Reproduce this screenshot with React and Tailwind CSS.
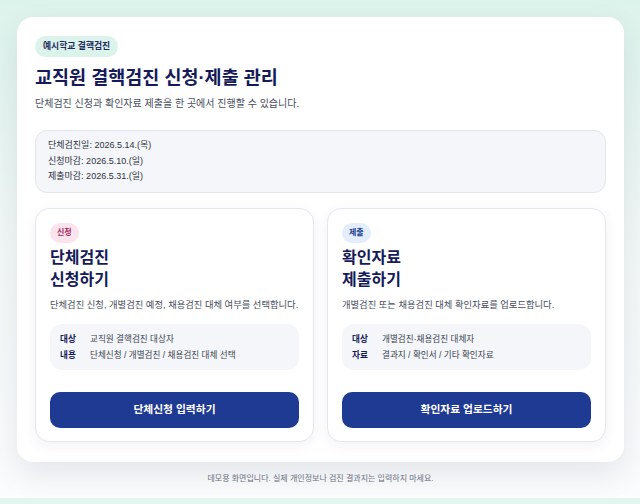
const cards = [
  {
    tag: "신청",
    tagClass: "bg-[#fce4ee] text-[#a3265a]",
    title: ["단체검진", "신청하기"],
    desc: "단체검진 신청, 개별검진 예정, 채용검진 대체 여부를 선택합니다.",
    rows: [
      ["대상", "교직원 결핵검진 대상자"],
      ["내용", "단체신청 / 개별검진 / 채용검진 대체 선택"],
    ],
    action: "단체신청 입력하기",
  },
  {
    tag: "제출",
    tagClass: "bg-[#e4edfc] text-[#23408f]",
    title: ["확인자료", "제출하기"],
    desc: "개별검진 또는 채용검진 대체 확인자료를 업로드합니다.",
    rows: [
      ["대상", "개별검진·채용검진 대체자"],
      ["자료", "결과지 / 확인서 / 기타 확인자료"],
    ],
    action: "확인자료 업로드하기",
  },
];

function ActionCard({ card }) {
  return (
    <div className="flex h-[234px] flex-col rounded-[14px] border border-[#e4e7f0] bg-white px-[14px] pb-[13px] pt-[14px] shadow-[0_4px_14px_rgba(30,40,90,0.06)]">
      <span className={`flex h-[20px] w-fit items-center rounded-full px-[7px] text-[8px] font-bold ${card.tagClass}`}>
        {card.tag}
      </span>
      <h2 className="mt-[4px] text-[16px] font-bold leading-[22px] text-[#151b58]">
        {card.title[0]}
        <br />
        {card.title[1]}
      </h2>
      <p className="mt-[7px] text-[9.3px] leading-[14px] text-[#474d5c]">{card.desc}</p>
      <div className="mt-[12px] rounded-[12px] bg-[#f4f6fa] px-[10px] py-[7px]">
        {card.rows.map(([label, value]) => (
          <div key={label} className="flex text-[8.6px] leading-[16px]">
            <span className="w-[30px] font-bold text-[#151b58]">{label}</span>
            <span className="text-[#3a3f4d]">{value}</span>
          </div>
        ))}
      </div>
      <button
        type="button"
        className="mt-auto h-[36px] w-full rounded-[10px] bg-[#1f3a92] text-[10.75px] font-bold text-white"
      >
        {card.action}
      </button>
    </div>
  );
}

export default function App() {
  return (
    <div
      className="min-h-screen bg-[#e2f6ef]"
      style={{ fontFamily: '"Liberation Sans", "Noto Sans CJK KR", sans-serif' }}
    >
      <div className="bg-gradient-to-b from-[#dcf3eb] via-[#f3f8f7] to-[#fbfcfd] pl-[17px] pr-[16px] pt-[17px] pb-[13px]">
        <div className="rounded-[16px] bg-white px-[18px] pb-[20px] pt-[19px] shadow-[0_12px_30px_rgba(30,40,80,0.10)]">
          <span className="flex h-[21px] w-fit items-center rounded-full bg-[#dcf3ec] px-[8px] text-[8.8px] font-bold text-[#1f2a5c]">
            예시학교 결핵검진
          </span>
          <h1 className="mt-[7px] text-[18.5px] font-bold leading-[28px] text-[#151b58]">
            교직원 결핵검진 신청·제출 관리
          </h1>
          <p className="mt-[4px] text-[10px] leading-[16px] text-[#474d5c]">
            단체검진 신청과 확인자료 제출을 한 곳에서 진행할 수 있습니다.
          </p>
          <div className="mt-[18px] rounded-[12px] border border-[#e2e5ef] bg-[#f4f6fa] px-[12px] py-[7px] text-[9px] leading-[15.5px] text-[#2f3340]">
            <div>단체검진일: 2026.5.14.(목)</div>
            <div>신청마감: 2026.5.10.(일)</div>
            <div>제출마감: 2026.5.31.(일)</div>
          </div>
          <div className="mt-[15px] grid grid-cols-2 gap-[13px]">
            {cards.map((card) => (
              <ActionCard key={card.tag} card={card} />
            ))}
          </div>
        </div>
        <p className="mt-[10px] text-center text-[8px] leading-[13px] text-[#6b7080]">
          데모용 화면입니다. 실제 개인정보나 검진 결과지는 입력하지 마세요.
        </p>
      </div>
    </div>
  );
}
